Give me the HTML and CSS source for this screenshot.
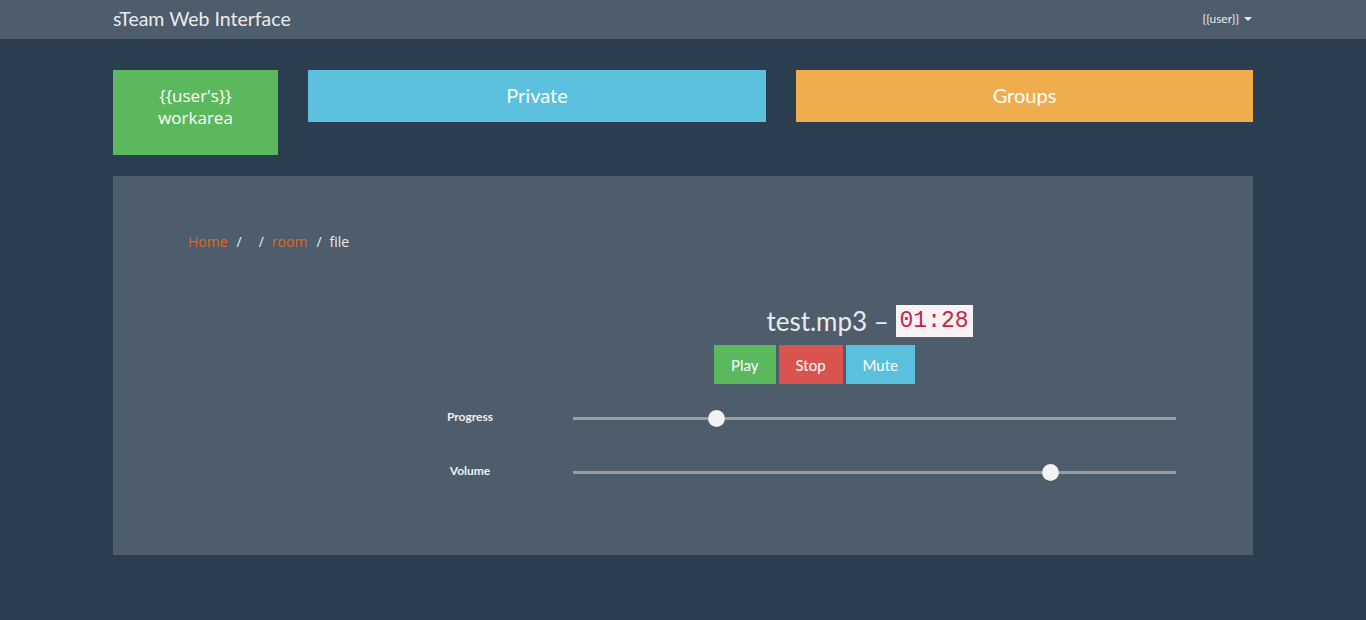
FILE: index.html
```html
<!DOCTYPE html>
<html>
<head>
<meta charset="utf-8">
<link rel="stylesheet" href="styles.css">
</head>
<body>
<nav class="navbar">
  <div class="container nav-inner">
    <span class="brand">sTeam Web Interface</span>
    <span class="user">{{user}} <span class="caret"></span></span>
  </div>
</nav>
<div class="container">
  <div class="tiles">
    <div class="tile tile-green">{{user's}}<br>workarea</div>
    <div class="tile tile-blue">Private</div>
    <div class="tile tile-orange">Groups</div>
  </div>
  <div class="panel">
    <ol class="breadcrumb">
      <li><a>Home</a></li>
      <li></li>
      <li><a>room</a></li>
      <li class="active">file</li>
    </ol>
    <div class="media">
      <h2 class="title">test.mp3 – <code>01:28</code></h2>
      <div class="buttons">
        <button class="btn btn-play">Play</button>
        <button class="btn btn-stop">Stop</button>
        <button class="btn btn-mute">Mute</button>
      </div>
      <div class="rows">
        <div class="row">
          <div class="label">Progress</div>
          <div class="cell"><div class="track"><span class="thumb" style="left:23.7%"></span></div></div>
        </div>
        <div class="row">
          <div class="label">Volume</div>
          <div class="cell"><div class="track"><span class="thumb" style="left:79.1%"></span></div></div>
        </div>
      </div>
    </div>
  </div>
</div>
</body>
</html>
```
FILE: styles.css
```css
* { box-sizing: border-box; }
html, body { margin: 0; padding: 0; }
body {
  background: #2b3e50;
  font-family: Lato, "Open Sans", sans-serif;
  color: #ebebeb;
  height: 620px;
  overflow: hidden;
}
.container { width: 1140px; margin: 0 auto; }
.navbar { background: #4e5d6c; height: 39px; }
.nav-inner { display: flex; justify-content: space-between; align-items: center; height: 39px; padding-bottom: 2px; }
.brand { font-size: 19.5px; color: #ebebeb; }
.user { font-size: 12px; color: #ebebeb; display: flex; align-items: center; gap: 5px; padding-right: 1px; }
.caret {
  display: inline-block; width: 0; height: 0;
  border-left: 4px solid transparent; border-right: 4px solid transparent;
  border-top: 4px solid #ebebeb;
}
.tiles { display: flex; gap: 30px; margin-top: 31px; align-items: flex-start; }
.tile {
  color: #fff; font-size: 20px; line-height: 22px; text-align: center;
  padding-top: 14px;
}
.tile-green { background: #5cb85c; width: 165px; height: 85px; font-family: "Open Sans", sans-serif; font-size: 17px; padding-top: 15px; }
.tile-blue { background: #5bc0de; width: 458px; height: 52px; }
.tile-orange { background: #f0ad4e; width: 457px; height: 52px; }
.panel { background: #4e5d6c; margin-top: 21px; height: 379px; padding-top: 56px; }
.breadcrumb {
  list-style: none; margin: 0; padding: 0 0 0 75px; display: flex;
  font-family: "Open Sans", sans-serif;
  font-size: 14px; line-height: 20px;
}
.breadcrumb a { color: #df691a; }
.breadcrumb li + li::before { content: "/"; padding: 0 8px 0 9px; color: #ebebeb; }
.breadcrumb .active { color: #ebebeb; }
.media { margin-left: 300px; width: 779px; margin-top: 53px; }
.title {
  margin: 0 0 0 144px; width: 625px; text-align: center;
  font-weight: 400; font-size: 26px; line-height: 32px; height: 32px;
  color: #ebebeb;
}
code {
  font-family: "Liberation Mono", monospace; font-size: 23px;
  background: #f9f2f4; color: #c7254e; padding: 0 4px;
  display: inline-block; line-height: 32px; vertical-align: top;
}
.buttons { margin: 8px 0 0 144px; width: 515px; display: flex; justify-content: center; gap: 3px; }
.btn {
  border: none; height: 39px; padding: 0 17px; font-family: Lato, sans-serif;
  font-size: 15px; color: #fff;
}
.btn-play { background: #5cb85c; }
.btn-stop { background: #d9534f; }
.btn-mute { background: #5bc0de; }
.rows { margin-top: 17px; }
.row { display: grid; grid-template-columns: 114px 635px; column-gap: 30px; height: 54px; }
.row + .row { height: 34px; }
.label { font-size: 12px; font-weight: 700; text-align: center; padding-top: 6px; line-height: 20px; color: #f0f0f0; }
.cell { border-top: 1px solid rgba(0,0,0,0.05); padding: 15px 16px 0; }
.row + .row .cell { border-bottom: 1px solid rgba(0,0,0,0.04); }
.track { position: relative; height: 3px; background: #9a9e9f; }
.thumb {
  position: absolute; top: -7px; width: 17px; height: 17px; margin-left: -8px;
  border-radius: 50%; background: #f2f2f2; box-shadow: 0 0 1px rgba(0,0,0,0.5);
}
```
